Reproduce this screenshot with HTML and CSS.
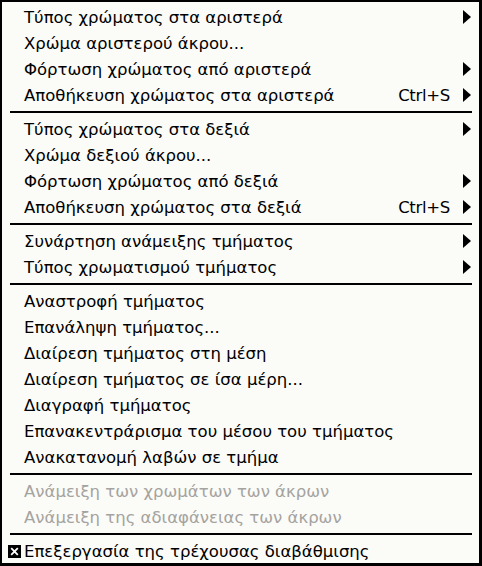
FILE: index.html
```html
<!DOCTYPE html>
<html lang="el">
<head>
<meta charset="utf-8">
<link rel="stylesheet" href="styles.css">
</head>
<body>
<div class="menu">
  <div class="item"><span class="label">Τύπος χρώματος στα αριστερά</span><span class="arrow"></span></div>
  <div class="item"><span class="label">Χρώμα αριστερού άκρου...</span></div>
  <div class="item"><span class="label">Φόρτωση χρώματος από αριστερά</span><span class="arrow"></span></div>
  <div class="item"><span class="label">Αποθήκευση χρώματος στα αριστερά</span><span class="accel">Ctrl+S</span><span class="arrow"></span></div>
  <div class="sep"></div>
  <div class="item"><span class="label">Τύπος χρώματος στα δεξιά</span><span class="arrow"></span></div>
  <div class="item"><span class="label">Χρώμα δεξιού άκρου...</span></div>
  <div class="item"><span class="label">Φόρτωση χρώματος από δεξιά</span><span class="arrow"></span></div>
  <div class="item"><span class="label">Αποθήκευση χρώματος στα δεξιά</span><span class="accel">Ctrl+S</span><span class="arrow"></span></div>
  <div class="sep"></div>
  <div class="item"><span class="label">Συνάρτηση ανάμειξης τμήματος</span><span class="arrow"></span></div>
  <div class="item"><span class="label">Τύπος χρωματισμού τμήματος</span><span class="arrow"></span></div>
  <div class="sep"></div>
  <div class="item"><span class="label">Αναστροφή τμήματος</span></div>
  <div class="item"><span class="label">Επανάληψη τμήματος...</span></div>
  <div class="item"><span class="label">Διαίρεση τμήματος στη μέση</span></div>
  <div class="item"><span class="label">Διαίρεση τμήματος σε ίσα μέρη...</span></div>
  <div class="item"><span class="label">Διαγραφή τμήματος</span></div>
  <div class="item"><span class="label">Επανακεντράρισμα του μέσου του τμήματος</span></div>
  <div class="item"><span class="label">Ανακατανομή λαβών σε τμήμα</span></div>
  <div class="sep"></div>
  <div class="item disabled"><span class="label">Ανάμειξη των χρωμάτων των άκρων</span></div>
  <div class="item disabled"><span class="label">Ανάμειξη της αδιαφάνειας των άκρων</span></div>
  <div class="sep"></div>
  <div class="item check"><span class="box"><svg width="13" height="13" viewBox="0 0 13 13"><rect x="0" y="0" width="13" height="13" fill="#000"/><path d="M3.2 3.2 L9.8 9.8 M9.8 3.2 L3.2 9.8" stroke="#fff" stroke-width="1.8"/></svg></span><span class="label">Επεξεργασία της τρέχουσας διαβάθμισης</span></div>
</div>
</body>
</html>
```
FILE: styles.css
```css
html, body {
  margin: 0;
  padding: 0;
  background: #fbfbf8;
}
.menu {
  box-sizing: border-box;
  width: 482px;
  height: 566px;
  border-style: solid;
  border-color: #000;
  border-width: 2px 3px 3px 2px;
  background: #fbfbf8;
  padding: 2px 0 0 0;
  font-family: "DejaVu Sans", sans-serif;
  font-size: 16.5px;
  color: #000;
}
.item {
  display: flex;
  align-items: center;
  height: 26px;
  padding-left: 22px;
  padding-right: 8px;
  white-space: nowrap;
}
.label {
  flex: 1;
}
.accel {
  margin-right: 13px;
  letter-spacing: -0.3px;
}
.arrow {
  width: 0;
  height: 0;
  border-top: 7px solid transparent;
  border-bottom: 7px solid transparent;
  border-left: 8px solid #000;
}
.disabled {
  color: #a5a39e;
}
.sep {
  height: 8px;
  display: flex;
  align-items: center;
  padding: 0 7px 0 8px;
}
.sep::before {
  content: "";
  flex: 1;
  height: 2px;
  background: #000;
}
.check {
  padding-left: 6px;
}
.box {
  display: flex;
  width: 13px;
  height: 13px;
  margin-right: 3px;
}
```
